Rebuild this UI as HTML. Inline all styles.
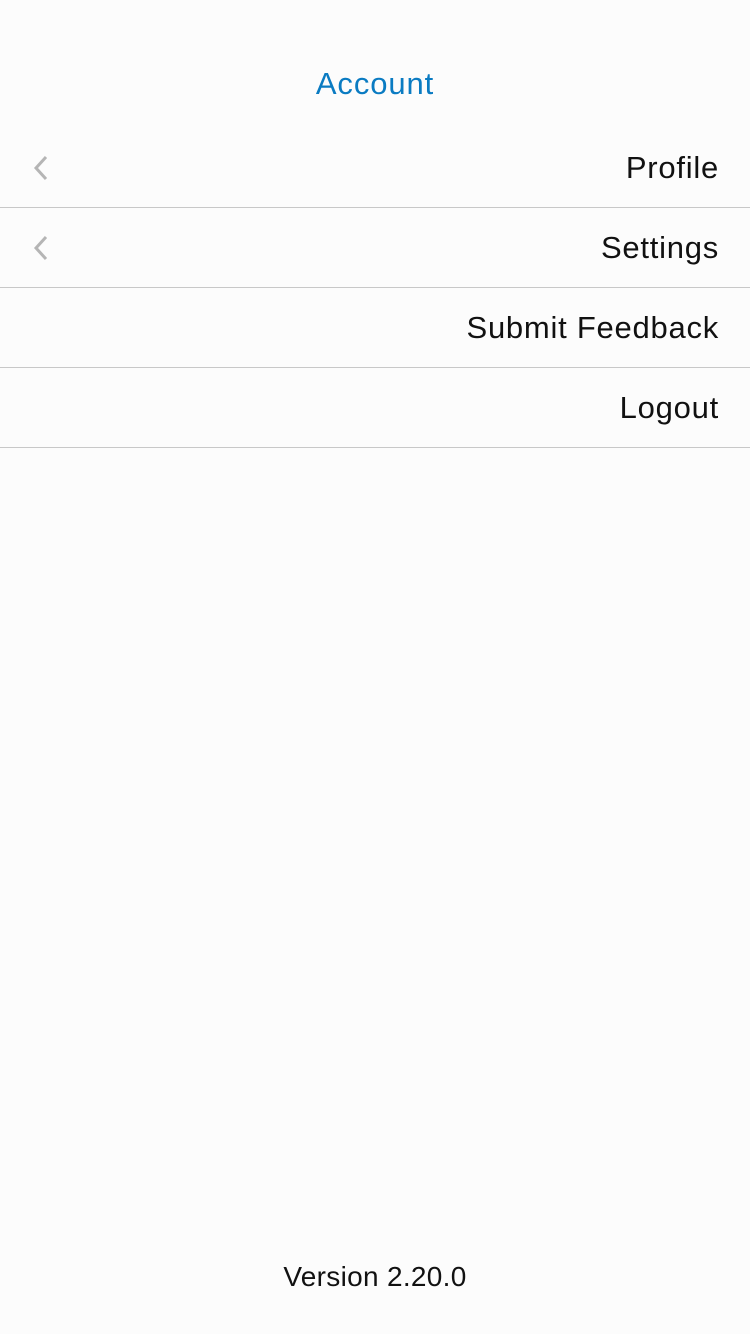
<!DOCTYPE html>
<html><head><style>
body{margin:0;width:750px;height:1334px;background:#fcfcfc;font-family:"Liberation Sans",sans-serif;position:relative;overflow:hidden}
.title{position:absolute;top:66px;width:100%;text-align:center;color:#0a7bc2;font-size:31px;letter-spacing:0.9px}
.row{position:absolute;left:0;width:750px;height:79px;border-bottom:1px solid #c8c8c8}
.row span{position:absolute;right:31px;top:22px;font-size:31px;color:#111;letter-spacing:0.75px}
.row svg{position:absolute;left:33px;top:27px}
.ver{position:absolute;top:1261px;width:100%;text-align:center;font-size:28px;color:#111;letter-spacing:0.3px}
</style></head><body>
<div class="title">Account</div>
<div class="row" style="top:128px"><svg width="16" height="26"><path d="M13 2 L3 13 L13 24" stroke="#b5b5b5" stroke-width="3" fill="none"/></svg><span>Profile</span></div>
<div class="row" style="top:208px"><svg width="16" height="26"><path d="M13 2 L3 13 L13 24" stroke="#b5b5b5" stroke-width="3" fill="none"/></svg><span>Settings</span></div>
<div class="row" style="top:288px"><span>Submit Feedback</span></div>
<div class="row" style="top:368px"><span>Logout</span></div>
<div class="ver">Version 2.20.0</div>
</body></html>
